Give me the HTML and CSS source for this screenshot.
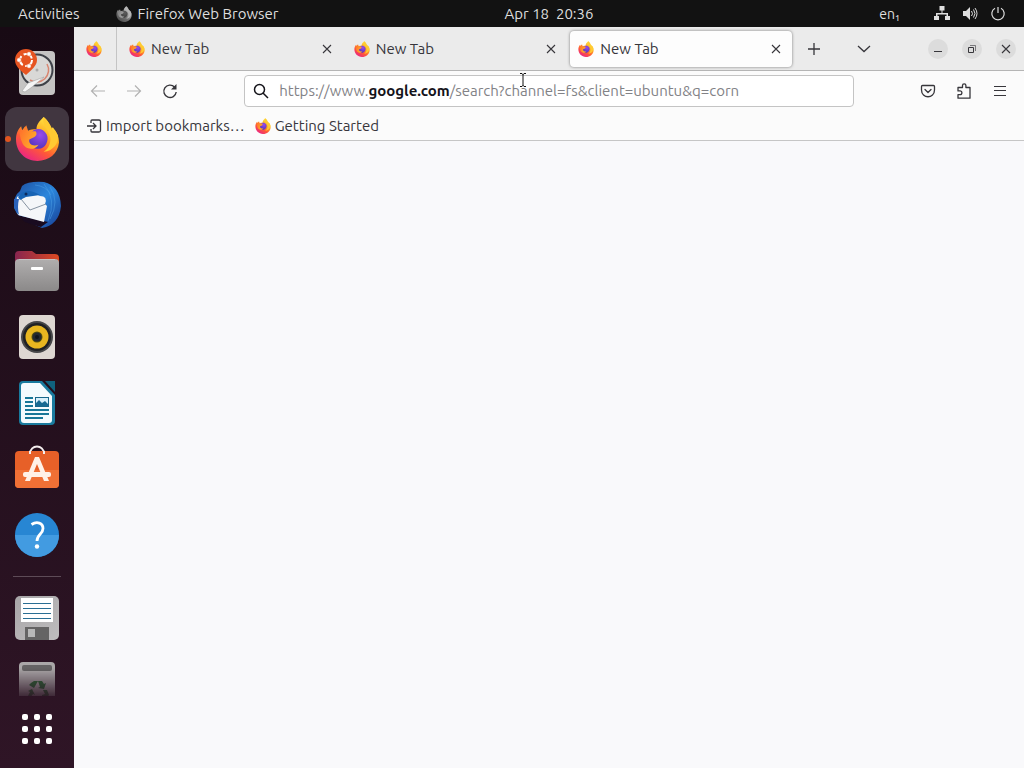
FILE: index.html
```html
<!DOCTYPE html>
<html lang="en">
<head>
<meta charset="utf-8">
<title>Firefox Web Browser</title>
<link rel="stylesheet" href="styles.css">
</head>
<body>
<svg class="defs" aria-hidden="true">
  <defs>
    <linearGradient id="flame" x1=".85" y1=".05" x2=".25" y2="1"><stop offset="0" stop-color="#fff04a"/><stop offset=".35" stop-color="#ffae22"/><stop offset=".65" stop-color="#ff5a36"/><stop offset="1" stop-color="#e8208a"/></linearGradient>
    <linearGradient id="fox" x1="0" y1="0" x2="1" y2=".6"><stop offset="0" stop-color="#ff6a2c"/><stop offset="1" stop-color="#ffb02a"/></linearGradient>
    <radialGradient id="globe" cx=".6" cy=".3" r=".8"><stop offset="0" stop-color="#9a4bea"/><stop offset="1" stop-color="#4b32b8"/></radialGradient>
    <linearGradient id="bird" x1="0" y1="0" x2="1" y2="1"><stop offset="0" stop-color="#1c4fa0"/><stop offset=".5" stop-color="#2b86dc"/><stop offset="1" stop-color="#163c92"/></linearGradient>
    <linearGradient id="folder" x1="0" y1="0" x2="1" y2="0"><stop offset="0" stop-color="#87254f"/><stop offset="1" stop-color="#dd4a22"/></linearGradient>
    <linearGradient id="metal" x1="0" y1="0" x2="0" y2="1"><stop offset="0" stop-color="#b0aeae"/><stop offset="1" stop-color="#8b8989"/></linearGradient>
    <linearGradient id="silver" x1="0" y1="0" x2="1" y2="1"><stop offset="0" stop-color="#a7a5a7"/><stop offset="1" stop-color="#bfbdbe"/></linearGradient>
  </defs>
  <symbol id="firefox" viewBox="0 0 44 44">
    <path fill="url(#flame)" d="M28 1C33 5 34 9 35 13L37 11C41 16 43 20 43 26C42 37 33 44 22 44C10 44 1 35 1 23C1 17 3 13 6 10L7 14L10 10L12 15C15 13 18 13 21 13C21 8 24 5 28 1Z"/>
    <path fill="url(#globe)" d="M14 18C19 11 27 11 31 18C34 24 29 33 22 32C15 32 12 25 14 18Z"/>
    <path fill="url(#fox)" d="M5 12L7 15L11 9L13 15L20 15C22 17 21 20 18 21L14 23C13 28 18 30 23 28C18 35 9 32 7 26C5 22 4 16 5 12Z"/>
    <path fill="#ffca32" d="M28 1C26 9 32 12 34 19C36 25 33 32 28 35C38 34 43 26 42 19L39 14L37 16C36 9 32 5 28 1Z"/>
  </symbol>
  <symbol id="close" viewBox="0 0 16 16"><path d="M4 4l8 8M12 4l-8 8" fill="none" stroke="currentColor" stroke-width="1.1"/></symbol>
</svg>

<header class="topbar">
  <div class="topbar-left">
    <button class="plain">Activities</button>
    <button class="plain app-menu"><svg class="app-icon" width="16" height="16"><use href="#firefox"/></svg>Firefox Web Browser</button>
  </div>
  <button class="plain clock">Apr 18&nbsp; 20:36</button>
  <div class="topbar-right">
    <button class="plain lang">en₁</button>
    <button class="plain status" aria-label="System menu">
      <svg width="16" height="16" viewBox="0 0 16 16" fill="currentColor"><path d="M5.500 0h5v4.500H8.500V7H14v3h2v4h-5v-4h1.500V8.500h-9V10H5v4H0v-4h2V7h5.500V4.500h-2z"/></svg>
      <svg width="16" height="16" viewBox="0 0 16 16"><path fill="currentColor" d="M1 5h3l4-4v13l-4-4H1z"/><path d="M9.500 5q2 3 0 5M11.500 3.500q3 4 0 8M13 2q4 5.500 0 11" fill="none" stroke="currentColor"/></svg>
      <svg width="16" height="16" viewBox="0 0 16 16" fill="none" stroke="currentColor" stroke-width="1.200"><path d="M8 1v6M5 2.300A6.200 6.200 0 1 0 11 2.300"/></svg>
    </button>
  </div>
</header>

<div class="desktop">
  <nav class="dock" aria-label="Dock">
    <div class="dock-list">
      <button class="dock-item" aria-label="Install Ubuntu"><svg viewBox="0 0 48 48"><rect x="6" y="2" width="36" height="44" rx="4" fill="#c5c4c3"/><circle cx="24" cy="21" r="15.500" fill="#d9d8d6" stroke="#3e4148" stroke-width="2"/><path d="M34 15A12 12 0 0 1 17 31" fill="none" stroke="#d98570" stroke-width="1.500"/><circle cx="24" cy="21" r="1.500" fill="#aaa"/><path d="M31 28L15 34L9 42L12 43L19 38Z" fill="#f5f5f5" stroke="#999" stroke-width=".5"/><path d="M13 26C7 21 2 17 2 11A11 11 0 0 1 24 11C24 17 18 21 13 26Z" fill="#e65421"/><circle cx="13" cy="11" r="6" fill="none" stroke="#fff" stroke-width="2" stroke-dasharray="10 2.560"/><g fill="#fff" stroke="#e65421" stroke-width=".5"><circle cx="6" cy="11" r="2.200"/><circle cx="16" cy="5" r="2.200"/><circle cx="16" cy="17" r="2.200"/></g></svg></button>
      <button class="dock-item active" aria-label="Firefox"><svg viewBox="0 0 48 48"><use href="#firefox" x="2" y="1" width="45" height="45"/></svg></button>
      <button class="dock-item" aria-label="Thunderbird"><svg viewBox="0 0 48 48"><path d="M9 5Q15 0 31 1Q47 5 48 25Q46 44 29 47L20 43Q5 38 1 27Q0 15 7 10Z" fill="url(#bird)"/><path d="M4 34L35 41L28 46Q20 44 12 41Z" fill="#190b20"/><path d="M4 16Q15 8 27 15Q35 15 32 23L34 25L31 41L5 34Q2 24 4 16Z" fill="#f4f6f9"/><path d="M8 18L17 29L33 23" fill="none" stroke="#8592a1"/><path d="M5 16Q12 5 27 14L13 16L7 19Z" fill="#1763b4"/><circle cx="13" cy="13" r="1.500" fill="#0d2a5c"/><path d="M1 18Q0 28 6 34Q4 26 6 18Z" fill="#2a62ba"/><path d="M31 3Q44 18 35 40M37 6Q47 20 37 38M22 4Q33 5 38 14" fill="none" stroke="#4da0e6" opacity=".5"/></svg></button>
      <button class="dock-item" aria-label="Files"><svg viewBox="0 0 48 48"><path d="M6 4h13l4 3h19q4 0 4 4v10H2V8q0-4 4-4z" fill="url(#folder)"/><rect x="2" y="12" width="44" height="32" rx="4" fill="url(#metal)"/><path d="M6 12.500h36" stroke="#c5c2c2"/><rect x="18" y="20" width="12" height="3" rx="1" fill="#fff"/></svg></button>
      <button class="dock-item" aria-label="Rhythmbox"><svg viewBox="0 0 48 48"><rect x="6" y="2" width="36" height="44" rx="4" fill="#ded7d2"/><circle cx="24" cy="24" r="16" fill="#464648"/><circle cx="24" cy="24" r="14" fill="#202124"/><circle cx="24" cy="24" r="11.500" fill="#e8b620"/><circle cx="24" cy="24" r="5.500" fill="#55500f"/><circle cx="24" cy="24" r="4.500" fill="#242830"/><circle cx="24" cy="24" r="2" fill="#11151c"/></svg></button>
      <button class="dock-item" aria-label="LibreOffice Writer"><svg viewBox="0 0 48 48"><path d="M10 2h19l13 14v26q0 4-4 4H10q-4 0-4-4V6q0-4 4-4z" fill="#197b9e"/><path d="M32 2h10v11z" fill="#10627e"/><path d="M11 4h16l12 13v24q0 3-3 3H11q-3 0-3-3V7q0-3 3-3z" fill="#f4fbfd"/><path d="M12 19h8M12 23h8M12 27h8M12 31h24M12 35h24M12 39h18" stroke="#187797" stroke-width="1.800"/><rect x="22.500" y="18.500" width="13" height="9" fill="#d8f0fa" stroke="#18688b"/><path d="M23 27v-3l3-3 3 3 3-2 3 3v2z" fill="#176a92"/></svg></button>
      <button class="dock-item" aria-label="Ubuntu Software"><svg viewBox="0 0 48 48"><path d="M17 9C17-1 31-1 31 9" fill="none" stroke="#f4eeee" stroke-width="2"/><rect x="2" y="6" width="44" height="37" rx="4" fill="#e76028"/><path d="M2 25h44v14q0 4-4 4H6q-4 0-4-4z" fill="#f07035"/><path d="M17 9V6M31 9V6" stroke="#f4eeee" stroke-width="2"/><path d="M22 12h4l10 24h-5L24 19l-7 17h-5z" fill="#fff1e7"/><rect x="10" y="27" width="28" height="5" rx="2" fill="#fff1e7"/></svg></button>
      <button class="dock-item" aria-label="Help"><svg viewBox="0 0 48 48"><circle cx="24" cy="24" r="22" fill="#2786d3"/><path d="M2 24a22 22 0 0 0 44 0z" fill="#429be1"/><path d="M18.500 13.500C24 10 30 12 30 17.500C30 23 24 23 24 30" fill="none" stroke="#fff" stroke-width="2.800"/><circle cx="24" cy="35.500" r="2.200" fill="#fff"/></svg></button>
      <hr class="dock-rule">
      <button class="dock-item" aria-label="Floppy disk"><svg viewBox="0 0 48 48"><rect x="2" y="2" width="44" height="44" rx="5" fill="url(#silver)"/><path d="M8 4h32v24H8z" fill="#fff"/><path d="M10 9.500h28M10 14.500h28M10 19.500h28M10 24.500h28" stroke="#2a6e93"/><path d="M12 33h24v13H12z" fill="#656464"/><path d="M15 35h7v8h-7z" fill="#b8b8b8"/></svg></button>
      <button class="dock-item" aria-label="Trash"><svg viewBox="0 0 48 48"><rect x="6" y="2" width="36" height="44" rx="4" fill="#aaa7a8"/><rect x="9" y="5" width="30" height="6" rx="2" fill="#656364"/><g fill="#2c6a38"><path d="M18 23l3-2h4l-4 7-5-3zM25 21h4l2 3 2-1-2 6-6-1 2-1zM30 30l4 0 2 5-3 4h-4v-4l3-1zM19 29l3 6-2-1-2 3h6v4h-6l-3-5 2-4-2-1z"/></g></svg></button>
    </div>
    <button class="apps" aria-label="Show Applications"><svg width="32" height="32" viewBox="0 0 32 32" fill="#fff"><rect x="1" y="1" width="6" height="6" rx="2"/><rect x="13" y="1" width="6" height="6" rx="2"/><rect x="25" y="1" width="6" height="6" rx="2"/><rect x="1" y="13" width="6" height="6" rx="2"/><rect x="13" y="13" width="6" height="6" rx="2"/><rect x="25" y="13" width="6" height="6" rx="2"/><rect x="1" y="25" width="6" height="6" rx="2"/><rect x="13" y="25" width="6" height="6" rx="2"/><rect x="25" y="25" width="6" height="6" rx="2"/></svg></button>
  </nav>

  <section class="browser">
    <div class="tabbar">
      <button class="pinned" aria-label="Firefox View"><svg width="16" height="16"><use href="#firefox"/></svg></button>
      <div class="tabs">
        <div class="tab"><button class="tab-main"><svg width="16" height="16"><use href="#firefox"/></svg>New Tab</button><button class="tab-close" aria-label="Close tab"><svg width="16" height="16"><use href="#close"/></svg></button></div>
        <div class="tab"><button class="tab-main"><svg width="16" height="16"><use href="#firefox"/></svg>New Tab</button><button class="tab-close" aria-label="Close tab"><svg width="16" height="16"><use href="#close"/></svg></button></div>
        <div class="tab selected"><button class="tab-main"><svg width="16" height="16"><use href="#firefox"/></svg>New Tab</button><button class="tab-close" aria-label="Close tab"><svg width="16" height="16"><use href="#close"/></svg></button></div>
      </div>
      <button class="tool" aria-label="New tab"><svg width="16" height="16" viewBox="0 0 16 16" stroke="currentColor" stroke-width="1.300"><path d="M8 2v12M2 8h12"/></svg></button>
      <button class="tool list-tabs" aria-label="List all tabs"><svg width="16" height="16" viewBox="0 0 16 16" fill="none" stroke="currentColor" stroke-width="1.300"><path d="M2 5l6 5.500L14 5"/></svg></button>
      <div class="window-buttons">
        <button aria-label="Minimize"><svg width="16" height="16" viewBox="0 0 16 16" stroke="currentColor"><path d="M4 10.500h8"/></svg></button>
        <button aria-label="Restore"><svg width="16" height="16" viewBox="0 0 16 16" fill="none" stroke="currentColor"><path d="M4.500 6.500h5v5h-5z"/><path d="M6 4.500h5.500V10" opacity=".6"/></svg></button>
        <button aria-label="Close"><svg width="16" height="16"><use href="#close"/></svg></button>
      </div>
    </div>

    <div class="navbar">
      <button class="tool" disabled aria-label="Back"><svg width="16" height="16" viewBox="0 0 16 16" fill="none" stroke="currentColor" stroke-width="1.200"><path d="M15 8H2M7 2.500L1.500 8 7 13.500"/></svg></button>
      <button class="tool" disabled aria-label="Forward"><svg width="16" height="16" viewBox="0 0 16 16" fill="none" stroke="currentColor" stroke-width="1.200"><path d="M1 8h13M9 2.500L14.500 8 9 13.500"/></svg></button>
      <button class="tool" aria-label="Reload"><svg width="16" height="16" viewBox="0 0 16 16" fill="none" stroke="currentColor" stroke-width="1.400"><path d="M12.500 4A6.200 6.200 0 1 0 14.200 9"/><path d="M14.500 1v5.500H9z" fill="currentColor" stroke="none"/></svg></button>
      <label class="urlbar">
        <svg width="16" height="16" viewBox="0 0 16 16" fill="none" stroke="#15141a" stroke-width="1.500"><circle cx="6.500" cy="6.500" r="5"/><path d="M10 10l5 5"/></svg>
        <span class="field">
          <input type="text" aria-label="Search or enter address" value="https://www.google.com/search?channel=fs&amp;client=ubuntu&amp;q=corn">
          <span class="url-format" aria-hidden="true">https://www.<b>google.com</b>/search?channel=fs&amp;client=ubuntu&amp;q=corn</span>
        </span>
      </label>
      <button class="tool" aria-label="Save to Pocket"><svg width="16" height="16" viewBox="0 0 16 16" fill="none" stroke="currentColor" stroke-width="1.300" stroke-linejoin="round" stroke-linecap="round"><path d="M2.500 2.500h11q1 0 1 1V7c0 9-13 9-13 0V3.500q0-1 1-1z"/><path d="M5 6.500l3 3 3-3"/></svg></button>
      <button class="tool" aria-label="Extensions"><svg width="16" height="16" viewBox="0 0 16 16" fill="none" stroke="currentColor" stroke-width="1.300" stroke-linejoin="round"><path d="M2 7.500V4.500h4.500V2.500a1.700 1.700 0 0 1 3.400 0v2H14v10.700H2v-3.500h2a1.900 1.900 0 0 0 0-3.800H2z"/></svg></button>
      <button class="tool" aria-label="Open application menu"><svg width="16" height="16" viewBox="0 0 16 16" stroke="currentColor" stroke-width="1.200"><path d="M2 3.500h12M2 7.500h12M2 12.500h12"/></svg></button>
      <svg class="pointer" width="8" height="16" viewBox="0 0 8 16" fill="none" stroke="#111"><path d="M1 .5h2l1 1 1-1h2M4 1v12M1 13.500h2l1-1 1 1h2"/></svg>
    </div>

    <div class="bookmarks">
      <button><svg width="16" height="16" viewBox="0 0 16 16" fill="none" stroke="currentColor" stroke-width="1.300"><path d="M5 5V3q0-1 1-1h7q1.500 0 1.500 1.500v9q0 1.500-1.500 1.500H6q-1 0-1-1v-2M1 8h9M7 5l3 3-3 3"/></svg>Import bookmarks…</button>
      <a href="#"><svg width="16" height="16"><use href="#firefox"/></svg>Getting Started</a>
    </div>
    <main class="page"></main>
  </section>
</div>
</body>
</html>
```

FILE: styles.css
```css
* { box-sizing: border-box; }
body {
  margin: 0;
  height: 100vh;
  display: flex;
  flex-direction: column;
  overflow: hidden;
  font: 15px/20px "Ubuntu", "Noto Sans", sans-serif;
  color: #37363b;
}
button {
  margin: 0;
  padding: 0;
  border: 0;
  background: none;
  color: inherit;
  font: inherit;
}
svg { display: block; flex: none; }
.defs { position: absolute; width: 0; height: 0; }

.topbar {
  flex: none;
  height: 27px;
  display: grid;
  grid-template-columns: 74px 1fr auto 1fr;
  align-items: center;
  background: #121212;
  color: #dedede;
}
.topbar-left {
  grid-column: 1 / 3;
  display: flex;
  gap: 36px;
  padding-left: 18px;
}
.app-menu { display: flex; align-items: center; gap: 6px; }
.app-icon { filter: grayscale(1) brightness(0.9); }
.topbar-right {
  display: flex;
  justify-content: flex-end;
  gap: 34px;
  padding-right: 18px;
}
.lang { font-size: 14px; }
.status { display: flex; align-items: center; gap: 12px; }

.desktop { flex: 1; min-height: 0; display: flex; }
.dock {
  flex: none;
  width: 74px;
  display: flex;
  flex-direction: column;
  background: linear-gradient(#180a14, #2f1526);
}
.dock-list {
  flex: 1;
  min-height: 0;
  overflow: hidden;
  display: flex;
  flex-direction: column;
  gap: 2px;
  padding: 14px 5px 0;
  mask-image: linear-gradient(to top, rgb(0 0 0 / 0.15), #000 28px);
}
.dock-item {
  flex: none;
  width: 64px;
  height: 64px;
  display: grid;
  place-items: center;
  border-radius: 12px;
}
.dock-item svg { width: 48px; height: 48px; }
.dock-item.active {
  position: relative;
  background: #413640;
}
.dock-item.active::before {
  content: "";
  position: absolute;
  left: 0;
  top: 29px;
  width: 6px;
  height: 6px;
  border-radius: 50%;
  background: #e2541f;
}
.dock-rule {
  flex: none;
  width: 48px;
  height: 1px;
  margin: 7px 8px;
  border: 0;
  background: #5d4b57;
}
.apps {
  flex: none;
  height: 72px;
  display: grid;
  place-items: center;
  padding-bottom: 6px;
}

.browser {
  flex: 1;
  min-width: 0;
  display: flex;
  flex-direction: column;
  background: #fbfbfb;
}
.tabbar {
  flex: none;
  height: 44px;
  display: flex;
  align-items: center;
  padding-right: 8px;
  background: #ebebeb;
  border-bottom: 1px solid #b5b5b5;
}
.pinned {
  align-self: stretch;
  width: 43px;
  padding-left: 12px;
  border-right: 1px solid #c4c4c4;
}
.tabs {
  flex: 0 1 679px;
  min-width: 0;
  display: flex;
  gap: 3px;
  padding: 0 4px;
}
.tab {
  flex: 1;
  min-width: 0;
  height: 36px;
  display: flex;
  align-items: center;
  padding: 0 8px;
  border-radius: 4px;
}
.tab.selected {
  background: #fdfdfd;
  box-shadow: 0 0 3px #777;
}
.tab-main {
  flex: 1;
  min-width: 0;
  display: flex;
  align-items: center;
  gap: 6px;
}
.tool {
  flex: none;
  width: 36px;
  height: 32px;
  display: grid;
  place-items: center;
}
.tool:disabled { color: #b2b2b2; }
.list-tabs { margin-left: 14px; }
.window-buttons { display: flex; gap: 14px; margin-left: auto; }
.window-buttons button {
  width: 20px;
  height: 20px;
  display: grid;
  place-items: center;
  border-radius: 50%;
  background: #dcdcdc;
}

.navbar {
  position: relative;
  flex: none;
  height: 40px;
  display: flex;
  align-items: center;
  padding: 0 6px;
}
.urlbar {
  flex: 1;
  min-width: 0;
  height: 32px;
  margin: 0 6%;
  display: flex;
  align-items: center;
  gap: 10px;
  padding: 0 8px;
  border: 1px solid #c4c4c4;
  border-radius: 4px;
  background: #fff;
}
.field { flex: 1; min-width: 0; display: grid; }
.field input {
  grid-area: 1 / 1;
  width: 100%;
  padding: 0;
  border: 0;
  outline: 0;
  background: none;
  font: inherit;
  color: transparent;
  caret-color: #15141a;
}
.url-format {
  grid-area: 1 / 1;
  overflow: hidden;
  white-space: nowrap;
  color: #828286;
  pointer-events: none;
}
.url-format b { font-weight: 600; color: #15141a; }
.pointer { position: absolute; left: 445px; top: 2px; }

.bookmarks {
  flex: none;
  height: 30px;
  display: flex;
  align-items: center;
  gap: 10px;
  padding: 0 12px;
  border-bottom: 1px solid #c6c6c6;
}
.bookmarks button,
.bookmarks a {
  display: flex;
  align-items: center;
  gap: 4px;
  color: inherit;
  text-decoration: none;
}
.page { flex: 1; background: #f9f9fb; }
```
